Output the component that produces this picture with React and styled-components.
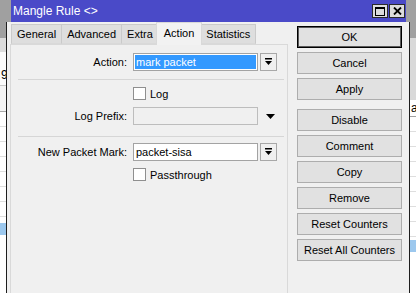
import React from "react";
import styled, { createGlobalStyle } from "styled-components";

const GlobalStyle = createGlobalStyle`
  html, body { margin: 0; padding: 0; }
  body {
    width: 416px;
    height: 293px;
    overflow: hidden;
    background: #a0a0a0;
    font-family: "Liberation Sans", Arial, sans-serif;
    font-size: 11px;
    color: #000;
  }
`;

const Desktop = styled.div`
  display: grid;
  grid-template-columns: 6px 404px 6px;
  height: 293px;
  overflow: hidden;
`;

// strips of the app behind the dialog
const Backdrop = styled.div`
  display: flex;
  flex-direction: column;
  overflow: hidden;
  background: #fff;
`;

const Band = styled.div`
  flex: ${(p) => (p.$h ? "none" : "1")};
  height: ${(p) => (p.$h ? `${p.$h}px` : "auto")};
  line-height: ${(p) => (p.$h ? `${p.$h}px` : "normal")};
  background: ${(p) => p.$bg || "#fff"};
  border-bottom: ${(p) => (p.$line ? `1px solid ${p.$line}` : "none")};
  box-sizing: border-box;
  font-size: 12px;
  white-space: nowrap;
  overflow: hidden;
  padding-left: ${(p) => p.$indent || 0}px;
`;

const Window = styled.div`
  display: flex;
  flex-direction: column;
  background: #a0a0a0;
`;

const TitleBar = styled.div`
  height: 22px;
  margin: 0 4px 0 5px;
  padding-left: 2px;
  background: #4a4ac8;
  color: #fff;
  display: flex;
  align-items: center;
  font-size: 12px;
`;

const Title = styled.span`
  flex: 1;
`;

const TitleButton = styled.div`
  width: 16px;
  height: 14px;
  margin-right: 1px;
  box-sizing: border-box;
  border: 1px solid #2a2a2a;
  background: #dcdcdc;
  display: flex;
  align-items: center;
  justify-content: center;
`;

const Body = styled.div`
  flex: 1;
  display: flex;
  gap: 9px;
  padding: 0 7px 0 3px;
  background: #f0f0f0;
  border-left: 1px solid #1e1e1e;
  border-right: 1px solid #1e1e1e;
  min-height: 0;
`;

const Main = styled.div`
  width: 278px;
  display: flex;
  flex-direction: column;
`;

const TabStrip = styled.div`
  height: 22px;
  display: flex;
  align-items: flex-end;
  padding-left: 1px;
`;

const Tab = styled.div`
  position: relative;
  z-index: ${(p) => (p.$active ? 1 : 0)};
  height: ${(p) => (p.$active ? 23 : 20)}px;
  margin: ${(p) => (p.$active ? "0 -2px -1px -2px" : "0 -1px 0 0")};
  padding: 0 ${(p) => (p.$active ? 7 : 5)}px;
  box-sizing: border-box;
  display: flex;
  align-items: center;
  padding-bottom: ${(p) => (p.$active ? 3 : 0)}px;
  background: ${(p) => (p.$active ? "#f2f2f2" : "#dedede")};
  border: 1px solid ${(p) => (p.$active ? "#d9d9d9" : "#cacaca")};
  border-bottom: ${(p) => (p.$active ? "none" : "1px solid #d9d9d9")};
  white-space: nowrap;
`;

const Panel = styled.div`
  flex: 1;
  border: 1px solid #d9d9d9;
  border-bottom: none;
  background: #f0f0f0;
  display: flex;
  flex-direction: column;
`;

const Row = styled.div`
  display: flex;
  align-items: center;
  height: 18px;
  margin-top: ${(p) => p.$top}px;
`;

const Label = styled.div`
  width: 116px;
  margin-right: 6px;
  text-align: right;
  white-space: nowrap;
`;

const Field = styled.div`
  width: 125px;
  height: 18px;
  box-sizing: border-box;
  padding: 1px;
  border: 1px solid ${(p) => (p.$disabled ? "#bdbdbd" : "#a3a3a3")};
  background: ${(p) => (p.$disabled ? "#f0f0f0" : "#fff")};
  display: flex;
  align-items: center;
`;

const FieldText = styled.span`
  flex: 1;
  align-self: stretch;
  display: flex;
  align-items: center;
  padding-left: 1px;
  background: ${(p) => (p.$selected ? "#3399ff" : "transparent")};
  color: ${(p) => (p.$selected ? "#fff" : "#000")};
  white-space: nowrap;
`;

const DropButton = styled.div`
  width: 17px;
  height: 18px;
  margin-left: 2px;
  box-sizing: border-box;
  border: 1px solid #a8a8a8;
  background: #f0f0f0;
  display: flex;
  align-items: center;
  justify-content: center;
`;

const DropSlot = styled.div`
  width: 17px;
  height: 18px;
  margin-left: 4px;
  display: flex;
  align-items: center;
  justify-content: center;
`;

const Separator = styled.div`
  height: 1px;
  width: 266px;
  margin: ${(p) => p.$top}px 0 0 7px;
  background: #d6d6d6;
`;

const CheckRow = styled.label`
  display: flex;
  align-items: center;
  height: 13px;
  margin-top: ${(p) => p.$top}px;
  padding-left: 122px;
`;

const CheckBox = styled.span`
  width: 13px;
  height: 13px;
  box-sizing: border-box;
  border: 1px solid #8f8f8f;
  background: #fff;
  margin-right: 4px;
`;

const Buttons = styled.div`
  width: 105px;
  display: flex;
  flex-direction: column;
  gap: 4px;
  padding-top: 4px;
`;

const Button = styled.div`
  height: 22px;
  box-sizing: border-box;
  margin-top: ${(p) => (p.$spaced ? 5 : 0)}px;
  border: 1px solid ${(p) => (p.$default ? "#000" : "#adadad")};
  box-shadow: ${(p) => (p.$default ? "inset 0 0 0 1px #5a5a5a" : "none")};
  background: #e1e1e1;
  display: flex;
  align-items: center;
  justify-content: center;
  white-space: nowrap;
`;

const DropIcon = () => (
  <svg width="9" height="8" viewBox="0 0 9 8">
    <rect x="1" y="0" width="7" height="1.5" fill="#000" />
    <polygon points="1,3 8,3 4.5,7" fill="#000" />
  </svg>
);

const TriangleIcon = () => (
  <svg width="9" height="5" viewBox="0 0 9 5">
    <polygon points="0,0 9,0 4.5,5" fill="#000" />
  </svg>
);

const MaximizeIcon = () => (
  <svg width="10" height="9" viewBox="0 0 10 9">
    <rect x="0.5" y="0.5" width="9" height="8" fill="none" stroke="#000" />
    <rect x="0" y="0" width="10" height="2" fill="#000" />
  </svg>
);

const CloseIcon = () => (
  <svg width="9" height="8" viewBox="0 0 9 8">
    <path d="M1 0.5 L8 7.5 M8 0.5 L1 7.5" stroke="#000" strokeWidth="1.8" />
  </svg>
);

const tabs = ["General", "Advanced", "Extra", "Action", "Statistics"];

const actions = [
  { label: "OK", isDefault: true },
  { label: "Cancel" },
  { label: "Apply" },
  { label: "Disable", spaced: true },
  { label: "Comment" },
  { label: "Copy" },
  { label: "Remove" },
  { label: "Reset Counters" },
  { label: "Reset All Counters" },
];

const rowLines = [133, 148, 163, 178, 193, 208, 223];

const LeftBackdrop = () => (
  <Backdrop>
    <Band $h={38} $bg="#a0a0a0" />
    <Band $h={14} $bg="#dcdcdc" />
    <Band $h={34} $bg="#fbfbfb" $line="#c8c8c8" $indent={1}>
      <span style={{ position: "relative", top: 6 }}>9</span>
    </Band>
    <Band $h={26} $bg="#f4f4f4" $line="#a8a8a8" />
    {rowLines.map((y) => (
      <Band key={y} $h={15} $line="#dedede" />
    ))}
    <Band $h={6} />
    <Band $h={12} $bg="#9cc8ee" />
    <Band />
  </Backdrop>
);

const RightBackdrop = () => (
  <Backdrop>
    <Band $h={38} $bg="#a0a0a0" />
    <Band $h={62} $bg="#d9d9d9" />
    <Band $h={17} $line="#a0a0a0" $indent={1}>a</Band>
    <Band $h={15} $line="#dedede" />
    {rowLines.map((y) => (
      <Band key={y} $h={15} $line="#dedede" />
    ))}
    <Band $h={3} />
    <Band $h={12} $bg="#9cc8ee" />
    <Band />
  </Backdrop>
);

export default function App() {
  return (
    <>
      <GlobalStyle />
      <Desktop>
        <LeftBackdrop />
        <Window>
          <TitleBar>
            <Title>Mangle Rule &lt;&gt;</Title>
            <TitleButton>
              <MaximizeIcon />
            </TitleButton>
            <TitleButton>
              <CloseIcon />
            </TitleButton>
          </TitleBar>
          <Body>
            <Main>
              <TabStrip>
                {tabs.map((t) => (
                  <Tab key={t} $active={t === "Action"}>
                    {t}
                  </Tab>
                ))}
              </TabStrip>
              <Panel>
                <Row $top={8}>
                  <Label>Action:</Label>
                  <Field>
                    <FieldText $selected>mark packet</FieldText>
                  </Field>
                  <DropButton>
                    <DropIcon />
                  </DropButton>
                </Row>
                <Separator $top={8} />
                <CheckRow $top={7}>
                  <CheckBox />
                  Log
                </CheckRow>
                <Row $top={7}>
                  <Label>Log Prefix:</Label>
                  <Field $disabled>
                    <FieldText />
                  </Field>
                  <DropSlot>
                    <TriangleIcon />
                  </DropSlot>
                </Row>
                <Separator $top={11} />
                <Row $top={6}>
                  <Label>New Packet Mark:</Label>
                  <Field>
                    <FieldText>packet-sisa</FieldText>
                  </Field>
                  <DropButton>
                    <DropIcon />
                  </DropButton>
                </Row>
                <CheckRow $top={7}>
                  <CheckBox />
                  Passthrough
                </CheckRow>
              </Panel>
            </Main>
            <Buttons>
              {actions.map((a) => (
                <Button key={a.label} $default={a.isDefault} $spaced={a.spaced}>
                  {a.label}
                </Button>
              ))}
            </Buttons>
          </Body>
        </Window>
        <RightBackdrop />
      </Desktop>
    </>
  );
}
